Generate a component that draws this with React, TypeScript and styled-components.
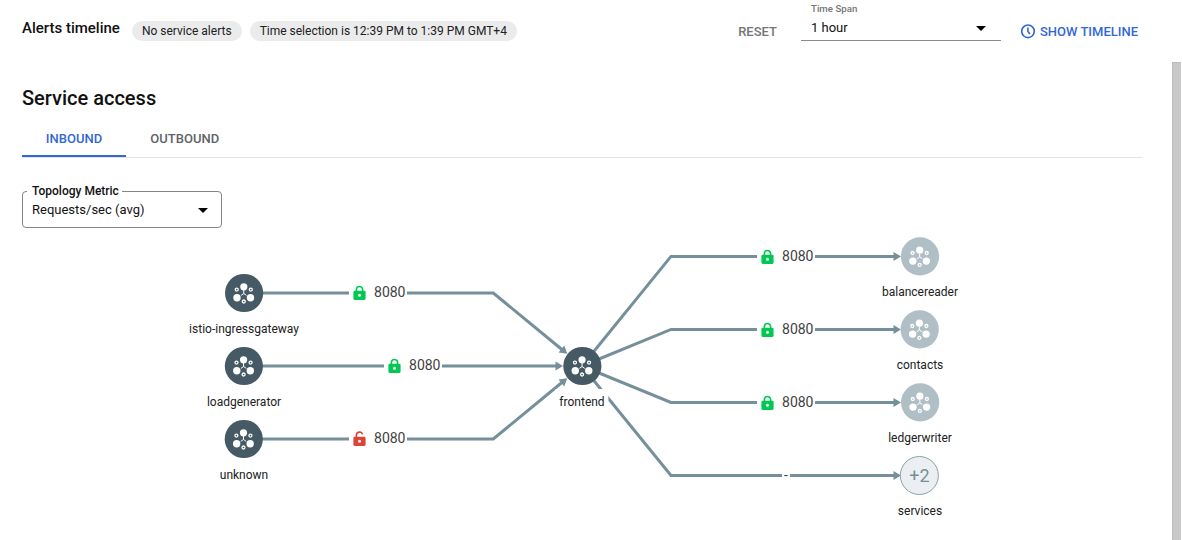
import React from "react";
import styled, { createGlobalStyle } from "styled-components";

const SLATE = "#758f9b";
const BLUE = "#3367d6";

const GlobalStyle = createGlobalStyle`
  * { box-sizing: border-box; }
  body { margin: 0; background: #fff; font-family: Roboto, "Liberation Sans", sans-serif; color: #111; overflow: hidden; }
  button { font: inherit; border: 0; background: none; padding: 0; margin: 0; }
`;

const Page = styled.div`
  display: flex;
  flex-direction: column;
  width: 1182px;
  height: 540px;
`;

const Header = styled.header`
  display: flex;
  height: 62px;
  padding: 0 44px 0 22px;
  justify-content: space-between;
`;

const HeaderGroup = styled.div`
  display: flex;
  height: 62px;
  align-items: center;
`;

const Title = styled.h1`
  margin: 0 12px 6px 0;
  font-size: 15px;
  line-height: 20px;
  font-weight: 500;
`;

const Chip = styled.span`
  height: 20px;
  padding: 0 10px;
  margin-right: 8px;
  border-radius: 10px;
  background: #ebebeb;
  font-size: 12px;
  line-height: 21px;
  color: #202124;
`;

const ActionButton = styled.button<{ $primary?: boolean }>`
  display: flex;
  align-items: center;
  gap: 4px;
  font-size: 13px;
  line-height: 21px;
  font-weight: 500;
  color: ${(p) => (p.$primary ? BLUE : "#757575")};
`;

const SpanSelect = styled.div`
  width: 200px;
  height: 41px;
  margin: 0 20px 0 24px;
  padding: 2px 15px 0 10px;
  align-self: flex-start;
  border-bottom: 1px solid #8a8a8a;
`;

const SpanLabel = styled.div`
  font-size: 9.7px;
  line-height: 14px;
  font-weight: 500;
  color: #757575;
`;

const SelectValue = styled.div`
  display: flex;
  align-items: center;
  justify-content: space-between;
  font-size: 13px;
  line-height: 24px;
  color: #111;
`;

const Body = styled.div`
  display: flex;
  flex: 1;
  min-height: 0;
  padding-right: 1px;
`;

const Content = styled.main`
  flex: 1;
  display: flex;
  flex-direction: column;
`;

const ScrollThumb = styled.div`
  width: 9px;
  background: #c9c9c9;
  border: solid #bdbdbd;
  border-width: 1px 0 0 1px;
`;

const SectionTitle = styled.h2`
  margin: 24px 0 0 22px;
  font-size: 20px;
  line-height: 24px;
  font-weight: 500;
`;

const Tabs = styled.div`
  display: flex;
  height: 36px;
  margin: 12px 30px 0 22px;
  border-bottom: 1px solid #e3e3e3;
`;

const Tab = styled.button<{ $active?: boolean }>`
  width: ${(p) => (p.$active ? 104 : 117.5)}px;
  height: 35px;
  padding-bottom: ${(p) => (p.$active ? 1 : 3)}px;
  font-size: 13px;
  line-height: 31px;
  font-weight: 500;
  color: ${(p) => (p.$active ? BLUE : "#5f6368")};
  border-bottom: ${(p) => (p.$active ? `2px solid ${BLUE}` : "0")};
`;

const MetricField = styled.fieldset`
  width: 200px;
  height: 44px;
  margin: 26px 0 0 22px;
  padding: 0 13px 0 9px;
  border: 1px solid #80868b;
  border-radius: 4px;
  min-width: 0;
`;

const MetricLegend = styled.legend`
  margin-left: -5px;
  padding: 0 3px 0 5px;
  font-size: 12px;
  line-height: 14px;
  font-weight: 500;
`;

const Canvas = styled.section`
  position: relative;
  flex: 1;
`;

const Edges = styled.svg`
  position: absolute;
  left: 0;
  top: 0;
`;

const NodeBox = styled.figure<{ $x: number; $y: number }>`
  position: absolute;
  left: ${(p) => p.$x}px;
  top: ${(p) => p.$y - 20}px;
  margin: 0;
  transform: translateX(-50%);
  display: flex;
  flex-direction: column;
  align-items: center;
`;

const NodeLabel = styled.figcaption`
  margin-top: 3px;
  padding: 1px 4px 0;
  background: #fff;
  font-size: 12px;
  line-height: 24px;
  white-space: nowrap;
  color: #212121;
`;

const EdgeLabel = styled.div<{ $x: number; $y: number; $width: number }>`
  position: absolute;
  left: ${(p) => p.$x}px;
  top: ${(p) => p.$y - 11}px;
  width: ${(p) => p.$width}px;
  height: 20px;
  display: flex;
  align-items: center;
  justify-content: center;
  gap: 8px;
  background: #fff;
  font-size: 14px;
  line-height: 20px;
  color: #424242;
`;

const PortLabel = styled(EdgeLabel)`
  justify-content: flex-end;
  padding-right: 1.5px;
`;

const MoreCount = styled.div`
  width: 39px;
  height: 39px;
  margin: 0.5px 1px 0.5px 0;
  border: 1.5px solid #8ba1ac;
  border-radius: 50%;
  background: #eceff1;
  text-align: center;
  font-size: 18px;
  line-height: 38px;
  color: ${SLATE};
`;

const Caret = () => (
  <svg width="10" height="5" viewBox="0 0 10 5"><path d="M0 0h10L5 5z" fill="#000" /></svg>
);

const ClockIcon = () => (
  <svg width="15" height="15" viewBox="0 0 15 15" fill="none" stroke={BLUE}>
    <circle cx="7" cy="7.3" r="6.3" strokeWidth="1.6" />
    <path d="M6.9 3.4v4.1l2 2.6" strokeWidth="1.6" />
  </svg>
);

const LockIcon = ({ open }: { open?: boolean }) => (
  <svg width="13" height="16" viewBox="0 -1.4 13 16">
    <path
      d={open ? "M3.4 6V3.9a3.1 3.1 0 0 1 6.1-.9" : "M3.4 6V4.2a3.1 3.1 0 0 1 6.2 0V6"}
      fill="none"
      stroke={open ? "#db4437" : "#00c853"}
      strokeWidth="1.6"
    />
    <rect x="0.4" y="5.4" width="12.2" height="9.1" rx="1.3" fill={open ? "#db4437" : "#00c853"} />
    <circle cx="6.5" cy="9.9" r="1.5" fill="#fff" />
  </svg>
);

const ServiceIcon = ({ muted }: { muted?: boolean }) => (
  <svg width="40" height="40" viewBox={muted ? "-20 -20.4 40 40" : "-20 -20 40 40"}>
    <circle r="19.1" fill={muted ? "#b0bec5" : "#455a64"} />
    <g fill="#fff">
      <circle cx="-0.3" cy="-6.2" r="3.6" />
      <circle cx="-7.1" cy="4.7" r="3.7" />
      <circle cx="6.4" cy="4.7" r="3.7" />
    </g>
    <g fill="none" stroke="#fff" strokeWidth="1.3">
      <circle cx="-7.4" cy="-3.4" r="1.5" />
      <circle cx="6.7" cy="-3.4" r="1.5" />
      <circle cx="-0.3" cy="8.5" r="1.5" />
      <path d="M-0.3 -3V0.5L-3 2.4M-0.3 0.5L2.4 2.4" strokeWidth="1" />
    </g>
  </svg>
);

const services = [
  { name: "istio-ingressgateway", x: 244, y: 65 },
  { name: "loadgenerator", x: 244, y: 138 },
  { name: "unknown", x: 244, y: 211 },
  { name: "frontend", x: 582, y: 138 },
  { name: "balancereader", x: 920, y: 28, muted: true },
  { name: "contacts", x: 920, y: 101, muted: true },
  { name: "ledgerwriter", x: 920, y: 174, muted: true },
];

const ports = [
  { x: 349, y: 65 },
  { x: 384, y: 138 },
  { x: 349, y: 211, open: true },
  { x: 757, y: 29 },
  { x: 757, y: 102 },
  { x: 757, y: 175 },
];

const edges = [
  "M244 65H493.3L562.5 122",
  "M244 138H557",
  "M244 211H493.3L562.5 154",
  "M582 138L671 28.4H895",
  "M582 138L671 101.4H895",
  "M582 138L671 174.4H895",
  "M582 138L671 247.4H895",
];

const arrows = [
  { x: 567.2, y: 125.8, angle: 39.5 },
  { x: 563, y: 138, angle: 0 },
  { x: 567.2, y: 150.2, angle: -39.5 },
  { x: 901, y: 28.4, angle: 0 },
  { x: 901, y: 101.4, angle: 0 },
  { x: 901, y: 174.4, angle: 0 },
  { x: 901, y: 247.4, angle: 0 },
];

export default function App() {
  return (
    <Page>
      <GlobalStyle />
      <Header>
        <HeaderGroup>
          <Title>Alerts timeline</Title>
          <Chip>No service alerts</Chip>
          <Chip>Time selection is 12:39 PM to 1:39 PM GMT+4</Chip>
        </HeaderGroup>
        <HeaderGroup>
          <ActionButton>RESET</ActionButton>
          <SpanSelect>
            <SpanLabel>Time Span</SpanLabel>
            <SelectValue>1 hour<Caret /></SelectValue>
          </SpanSelect>
          <ActionButton $primary><ClockIcon />SHOW TIMELINE</ActionButton>
        </HeaderGroup>
      </Header>
      <Body>
        <Content>
          <SectionTitle>Service access</SectionTitle>
          <Tabs>
            <Tab $active>INBOUND</Tab>
            <Tab>OUTBOUND</Tab>
          </Tabs>
          <MetricField>
            <MetricLegend>Topology Metric</MetricLegend>
            <SelectValue>Requests/sec (avg)<Caret /></SelectValue>
          </MetricField>
          <Canvas>
            <Edges width="1172" height="312" viewBox="0 0 1172 312">
              {edges.map((d) => <path key={d} d={d} fill="none" stroke={SLATE} strokeWidth="3" />)}
              {arrows.map((a) => (
                <path
                  key={`${a.x}-${a.y}`}
                  d="M0 0L-7.5 -4.5V4.5z"
                  fill={SLATE}
                  transform={`translate(${a.x} ${a.y}) rotate(${a.angle})`}
                />
              ))}
            </Edges>
            {services.map((s) => (
              <NodeBox key={s.name} $x={s.x} $y={s.y}>
                <ServiceIcon muted={s.muted} />
                <NodeLabel>{s.name}</NodeLabel>
              </NodeBox>
            ))}
            <NodeBox $x={920} $y={247}>
              <MoreCount>+2</MoreCount>
              <NodeLabel>services</NodeLabel>
            </NodeBox>
            {ports.map((p) => (
              <PortLabel key={`${p.x}-${p.y}`} $x={p.x} $y={p.y} $width={58}>
                <LockIcon open={p.open} />8080
              </PortLabel>
            ))}
            <EdgeLabel $x={782} $y={248} $width={8}>-</EdgeLabel>
          </Canvas>
        </Content>
        <ScrollThumb />
      </Body>
    </Page>
  );
}
